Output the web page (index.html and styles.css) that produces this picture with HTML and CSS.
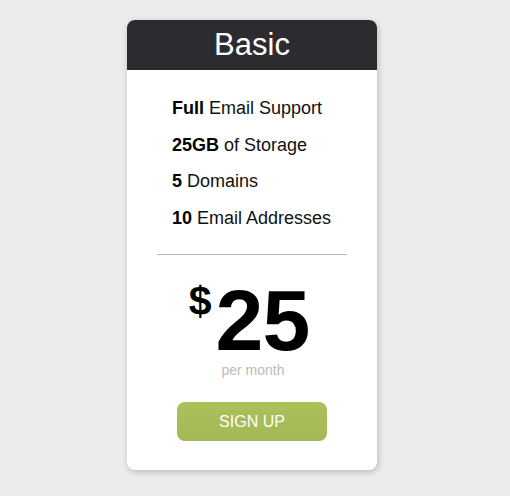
FILE: index.html
```html
<!DOCTYPE html>
<html>
<head>
<meta charset="utf-8">
<link rel="stylesheet" href="styles.css">
</head>
<body>
<div class="card">
  <div class="card-header">Basic</div>
  <ul class="features">
    <li><b>Full</b> Email Support</li>
    <li><b>25GB</b> of Storage</li>
    <li><b>5</b> Domains</li>
    <li><b>10</b> Email Addresses</li>
  </ul>
  <hr class="divider">
  <div class="price"><span class="currency">$</span><span class="amount">25</span></div>
  <div class="period">per month</div>
  <div class="action"><a class="btn" href="#">SIGN UP</a></div>
</div>
</body>
</html>
```
FILE: styles.css
```css
html, body {
  margin: 0;
  padding: 0;
}
body {
  background: #ececec;
  font-family: "Liberation Sans", Arial, sans-serif;
  height: 496px;
  overflow: hidden;
}
.card {
  width: 250px;
  height: 450px;
  margin: 20px 0 0 127px;
  background: #fff;
  border-radius: 8px;
  box-shadow: 1px 2px 6px rgba(0,0,0,0.22);
  overflow: hidden;
  display: flex;
  flex-direction: column;
}
.card-header {
  background: #2c2c30;
  color: #fff;
  height: 50px;
  line-height: 50px;
  text-align: center;
  font-size: 31px;
}
.features {
  list-style: none;
  margin: 0;
  padding: 20px 0 0 45px;
  font-size: 18px;
  color: #111;
}
.features li {
  height: 36.5px;
  line-height: 36.5px;
}
.features b {
  color: #000;
}
.divider {
  border: 0;
  border-top: 1px solid #bbb;
  margin: 18px 30px 0 30px;
  height: 0;
}
.price {
  display: flex;
  justify-content: center;
  align-items: flex-start;
  margin-top: 30px;
  font-weight: bold;
  color: #000;
  height: 70px;
}
.currency {
  font-size: 41px;
  line-height: 41px;
  margin-top: -4px;
  margin-right: 4px;
  margin-left: -6px;
}
.amount {
  font-size: 86px;
  line-height: 70px;
  letter-spacing: -1px;
}
.period {
  text-align: center;
  font-size: 14px;
  line-height: 16px;
  color: #bbb;
  margin-top: 7px;
  margin-left: 2px;
}
.action {
  display: flex;
  justify-content: center;
  margin-top: 24px;
}
.btn {
  display: block;
  width: 150px;
  height: 39px;
  line-height: 39px;
  border-radius: 8px;
  background: linear-gradient(#acc05a, #a3b955);
  color: #fff;
  text-align: center;
  text-decoration: none;
  font-size: 16px;
}
```
